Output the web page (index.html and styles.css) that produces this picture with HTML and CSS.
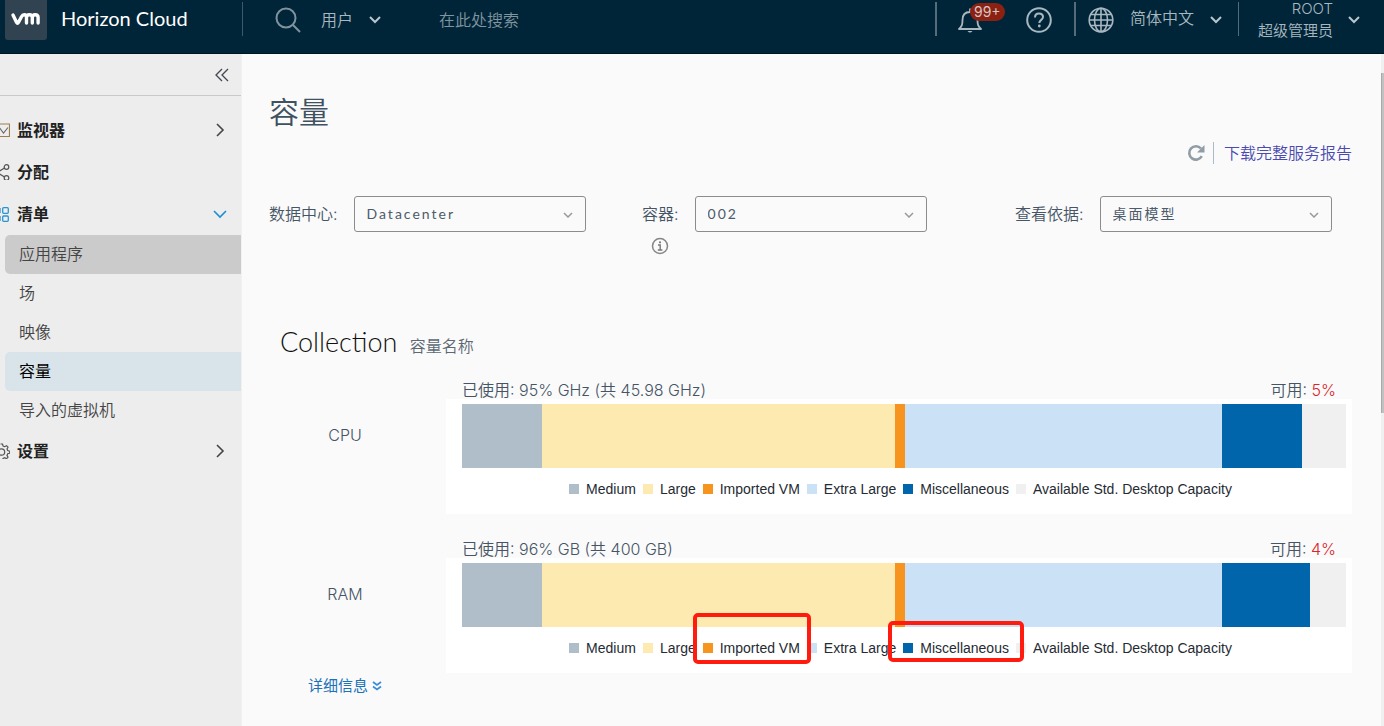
FILE: index.html
```html
<!DOCTYPE html>
<html lang="zh-CN">
<head>
<meta charset="utf-8">
<title>Horizon Cloud - 容量</title>
<meta name="viewport" content="width=device-width, initial-scale=1">
<link rel="stylesheet" href="styles.css">
</head>
<body>
<header class="topbar">
  <div class="brand">
    <svg class="brand-logo" viewBox="0 0 42 40" role="img" aria-label="vm"><path d="M0 0h42v37q0 3-3 3H3q-3 0-3-3z" fill="#314351"/><path d="M8 15l3.600 7.500q.9 1.600 1.800 0l3.200-6q.9-1.800 2.600-1.800 2.300 0 2.300 2.600V23v-5.500q0-2.800 2.900-2.800t2.900 2.800V23v-5.500q0-2.800 2.900-2.800t2.900 2.800V23" fill="none" stroke="#fff" stroke-width="3.400" stroke-linecap="round" stroke-linejoin="round"/></svg>
    <span class="brand-name">Horizon Cloud</span>
  </div>
  <div class="search">
    <svg class="icon-26" viewBox="0 0 26 26"><g fill="none" stroke="#7f939d" stroke-width="2"><circle cx="11" cy="11" r="9.500"/><path d="M18 18l7 7"/></g></svg>
    <button class="bar-button search-type" type="button">用户
      <svg class="chevron" viewBox="0 0 12 8"><path d="M1 1l5 5 5-5"/></svg>
    </button>
    <input class="search-input" type="text" placeholder="在此处搜索" aria-label="在此处搜索">
  </div>
  <div class="tools">
    <button class="bar-button bell" type="button" aria-label="通知">
      <svg class="icon-26" viewBox="0 0 26 26"><path d="M3 22h22c-3-3-3.500-4.500-3.500-9 0-5-2.500-8-7.500-8s-7.500 3-7.500 8c0 4.500-.5 6-3.500 9zM14 5V1.500" fill="none" stroke="#a9b8c0" stroke-width="1.800" stroke-linejoin="round"/><path d="M11.500 24h5q-2.500 3-5 0z" fill="#a9b8c0"/></svg>
      <span class="badge">99+</span>
    </button>
    <button class="bar-button help" type="button" aria-label="帮助">
      <svg class="icon-26" viewBox="0 0 26 26"><g fill="none" stroke="#a9b8c0" stroke-width="2"><circle cx="13" cy="13" r="11.800"/><path d="M9 10.500q0-4 4-4t4 3.600c0 2.700-3.700 2.900-3.700 6"/></g><circle cx="13.300" cy="19" r="1.400" fill="#a9b8c0"/></svg>
    </button>
    <button class="bar-button language" type="button">
      <svg class="icon-26" viewBox="0 0 26 26"><g fill="none" stroke="#a9b8c0" stroke-width="1.600"><circle cx="13" cy="13" r="11.800"/><ellipse cx="13" cy="13" rx="6.500" ry="11.800"/><path d="M13 1v24M1 13h24M3 7.500h20M3 18.500h20"/></g></svg>
      <span class="language-name">简体中文</span>
      <svg class="chevron" viewBox="0 0 12 8"><path d="M1 1l5 5 5-5"/></svg>
    </button>
    <button class="bar-button account" type="button">
      <span class="account-name"><span>ROOT</span><span>超级管理员</span></span>
      <svg class="chevron" viewBox="0 0 12 8"><path d="M1 1l5 5 5-5"/></svg>
    </button>
  </div>
</header>
<div class="layout">
  <aside class="sidebar">
    <div class="collapse">
      <button class="collapse-button" type="button" aria-label="收起"><svg viewBox="0 0 14 14"><path d="M7 1L1 7l6 6M13 1L7 7l6 6" fill="none" stroke="#3e4650" stroke-width="1.300"/></svg></button>
    </div>
    <nav class="nav">
      <a class="nav-group" href="#">
        <svg class="nav-icon" viewBox="6 0 10 16"><path d="M1 2h14.500v12.500H1z" fill="none" stroke="#a27c50" stroke-width="1.200"/><path d="M5 5l4.500 6L14 5.500" fill="none" stroke="#666" stroke-width="1.100"/></svg>
        <span>监视器</span>
        <svg class="nav-arrow" viewBox="0 0 14 14"><path d="M4 1l6 6-6 6"/></svg>
      </a>
      <a class="nav-group" href="#">
        <svg class="nav-icon" viewBox="6 0 10 16"><g fill="none" stroke="#555" stroke-width="1.200"><circle cx="12.500" cy="3" r="2.300"/><circle cx="12.500" cy="14" r="2.300"/><path d="M4 8l6.500-4M4 9l6.500 4"/></g></svg>
        <span>分配</span>
      </a>
      <a class="nav-group" href="#">
        <svg class="nav-icon" viewBox="6 0 10 16"><g fill="none" stroke="#2a94cf" stroke-width="1.300"><rect x="8.700" y="1.700" width="5.600" height="5.600" rx="1"/><rect x="8.700" y="10" width="5.600" height="5.300" rx="1"/><path d="M6 2v5M6 10v5"/></g></svg>
        <span>清单</span>
        <svg class="nav-arrow nav-arrow-open" viewBox="0 0 14 14"><path d="M1 4l6 6 6-6"/></svg>
      </a>
      <a class="nav-item nav-item-hover" href="#">应用程序</a>
      <a class="nav-item" href="#">场</a>
      <a class="nav-item" href="#">映像</a>
      <a class="nav-item nav-item-active" href="#" aria-current="page">容量</a>
      <a class="nav-item" href="#">导入的虚拟机</a>
      <a class="nav-group" href="#">
        <svg class="nav-icon" viewBox="6 0 10 16"><g fill="none" stroke="#555" stroke-width="1.200"><circle cx="7.500" cy="9" r="3.200"/><path d="M6.500 1h2l.6 2 1.600.7 1.800-1 1.500 1.500-1 1.800.7 1.600 2 .6v2l-2 .6-.7 1.600 1 1.800-1.500 1.500-1.800-1-1.600.7-.6 1.500h-2"/></g></svg>
        <span>设置</span>
        <svg class="nav-arrow" viewBox="0 0 14 14"><path d="M4 1l6 6-6 6"/></svg>
      </a>
    </nav>
  </aside>
  <main class="content">
    <h1 class="title">容量</h1>
    <div class="actions">
      <button class="refresh" type="button" aria-label="刷新"><svg viewBox="0 0 18 18"><path d="M14.800 12.200A6.700 6.700 0 1 1 14 4.500" fill="none" stroke="#909da5" stroke-width="2.600"/><path d="M17.500 1v7.500H10z" fill="#909da5"/></svg></button>
      <a class="report" href="#">下载完整服务报告</a>
    </div>
    <form class="filters">
      <div class="filter">
        <label for="dc">数据中心:</label>
        <div class="picker"><select id="dc"><option>Datacenter</option></select><svg viewBox="0 0 10 6"><path d="M1 1l4 4 4-4"/></svg></div>
      </div>
      <div class="filter">
        <label for="pod">容器:</label>
        <div class="picker"><select id="pod"><option>002</option></select><svg viewBox="0 0 10 6"><path d="M1 1l4 4 4-4"/></svg></div>
        <svg class="info" viewBox="0 0 18 18"><circle cx="9" cy="9" r="7.500" fill="none" stroke="#858585" stroke-width="1.500"/><circle cx="9" cy="5.300" r="1.100" fill="#777"/><path d="M7 8h2.200v5M6.800 13h4.600" fill="none" stroke="#777" stroke-width="1.400"/></svg>
      </div>
      <div class="filter">
        <label for="view">查看依据:</label>
        <div class="picker"><select id="view"><option>桌面模型</option></select><svg viewBox="0 0 10 6"><path d="M1 1l4 4 4-4"/></svg></div>
      </div>
    </form>
    <h2 class="pod-name">Collection <small>容量名称</small></h2>
    <section class="usage">
      <h3 class="usage-name">CPU</h3>
      <div class="usage-body">
        <div class="usage-text"><span>已使用: 95% GHz (共 45.98 GHz)</span><span>可用: <b>5%</b></span></div>
        <div class="panel">
          <div class="bar"><i class="medium" style="flex-grow:80"></i><i class="large" style="flex-grow:353"></i><i class="imported" style="flex-grow:10"></i><i class="xlarge" style="flex-grow:317"></i><i class="misc" style="flex-grow:80"></i><i class="free" style="flex-grow:44"></i></div>
          <ul class="legend"><li><i class="medium"></i>Medium</li><li><i class="large"></i>Large</li><li><i class="imported"></i>Imported VM</li><li><i class="xlarge"></i>Extra Large</li><li><i class="misc"></i>Miscellaneous</li><li><i class="free"></i>Available Std. Desktop Capacity</li></ul>
        </div>
      </div>
    </section>
    <section class="usage">
      <h3 class="usage-name">RAM</h3>
      <div class="usage-body">
        <div class="usage-text"><span>已使用: 96% GB (共 400 GB)</span><span>可用: <b>4%</b></span></div>
        <div class="panel">
          <div class="bar"><i class="medium" style="flex-grow:80"></i><i class="large" style="flex-grow:353"></i><i class="imported" style="flex-grow:10"></i><i class="xlarge" style="flex-grow:317"></i><i class="misc" style="flex-grow:88"></i><i class="free" style="flex-grow:36"></i></div>
          <ul class="legend"><li><i class="medium"></i>Medium</li><li><i class="large"></i>Large</li><li class="marked marked-imported"><i class="imported"></i>Imported VM</li><li><i class="xlarge"></i>Extra Large</li><li class="marked marked-misc"><i class="misc"></i>Miscellaneous</li><li><i class="free"></i>Available Std. Desktop Capacity</li></ul>
        </div>
      </div>
    </section>
    <a class="details" href="#">详细信息<svg viewBox="0 0 10 10"><path d="M1 1l4 3 4-3M1 5.500l4 3 4-3" fill="none" stroke="#3b8ad8" stroke-width="1.700"/></svg></a>
  </main>
  <div class="scroll-track"><div class="scroll-thumb"></div></div>
</div>
</body>
</html>
```
FILE: styles.css
```css
* { box-sizing: border-box; }
body {
  margin: 0;
  min-height: 100vh;
  display: flex;
  flex-direction: column;
  background: #fafafa;
  color: #465566;
  font: 350 16px/20px Inter, "Noto Sans CJK SC", sans-serif;
}
a { color: inherit; text-decoration: none; }
button { margin: 0; padding: 0; border: 0; background: none; color: inherit; font: inherit; cursor: pointer; }
h1, h2, h3, ul { margin: 0; padding: 0; font-weight: 350; }
svg { display: block; flex: none; }

.topbar {
  display: flex;
  height: 54px;
  padding: 0 24px 14px 5px;
  background: #002538;
  border-bottom: 1px solid #001522;
  color: #a9b8c0;
}
.brand {
  display: flex;
  align-items: center;
  gap: 14px;
  width: 238px;
  background: linear-gradient(#40596a, #40596a) right 2px / 1px 34px no-repeat;
}
.brand-logo { width: 42px; height: 40px; }
.brand-name { padding-bottom: 3px; color: #fff; font: 400 20px/24px Lato, sans-serif; }
.search { display: flex; flex: 1; align-items: center; padding-left: 32px; }
.icon-26 { width: 26px; height: 26px; }
.bar-button { display: flex; align-items: center; }
.search-type { gap: 16px; margin-left: 20px; }
.chevron { width: 12px; height: 8px; fill: none; stroke: #b9c6cc; stroke-width: 2; }
.search-input {
  flex: 1;
  min-width: 80px;
  margin-left: 58px;
  padding: 0;
  border: 0;
  outline: 0;
  background: none;
  color: inherit;
  font: inherit;
}
.search-input::placeholder { color: #8195a0; opacity: 1; }
.tools { display: flex; }
.bell, .language, .account { background: linear-gradient(#566d79, #566d79) left 2px / 2px 34px no-repeat; }
.bell { position: relative; width: 91px; padding-left: 21px; }
.badge {
  position: absolute;
  left: 35px;
  top: 3px;
  padding: 0 4px;
  border-radius: 9px;
  background: #8c2113;
  color: #d5c5c4;
  font-size: 14px;
  font-weight: 400;
  line-height: 18px;
}
.help { width: 48px; }
.language { gap: 16px; width: 164px; padding-left: 14px; }
.language-name { padding-bottom: 4px; }
.account { justify-content: flex-end; gap: 15px; width: 122px; background-size: 1px 34px; }
.account-name { display: grid; text-align: right; font-size: 15px; line-height: 22px; }

.layout { display: flex; flex: 1; }
.sidebar { width: 242px; background: #ededed; border-right: 1px solid #f1f1f1; color: #444; }
.collapse { display: flex; justify-content: flex-end; height: 42px; padding: 0 12px; border-bottom: 1px solid #c9c9c9; }
.collapse-button svg { width: 14px; height: 14px; }
.nav { padding-top: 13px; }
.nav-group { display: flex; align-items: center; gap: 7px; height: 42px; padding-right: 14px; color: #222; font-weight: 700; }
.nav-icon { width: 10px; height: 16px; }
.nav-arrow { width: 14px; height: 14px; margin-left: auto; fill: none; stroke: #444; stroke-width: 1.6; }
.nav-arrow-open { stroke: #1b8fd6; }
.nav-item { display: flex; align-items: center; height: 39px; margin-left: 5px; padding: 0 14px 2px; border-radius: 5px 0 0 5px; }
.nav-item-hover { background: #cbcbcb; }
.nav-item-active { background: #d9e4ea; color: #000; font-weight: 400; }

.content { flex: 1; min-width: 0; padding: 38px 29px 24px 27px; }
.title { color: #40515f; font-size: 30px; line-height: 40px; }
.actions { display: flex; justify-content: flex-end; align-items: center; height: 22px; margin-top: 10px; }
.refresh { margin-right: 8px; }
.refresh svg { width: 18px; height: 18px; }
.report { padding-left: 10px; border-left: 1px solid #a9bccb; color: #4a4ab0; line-height: 22px; }
.filters { display: grid; grid-template-columns: repeat(3, 1fr); gap: 36px; margin-top: 32px; }
.filter { display: grid; grid-template-columns: max-content minmax(0, 232px); align-items: center; align-content: start; gap: 5px 16px; }
.picker { position: relative; }
.picker select {
  appearance: none;
  width: 100%;
  height: 36px;
  padding: 0 12px;
  border: 1px solid #8c8c8c;
  border-radius: 3px;
  background: #fafafa;
  color: #4d5b6b;
  font: 400 14px/20px Lato, "Noto Sans CJK SC", sans-serif;
  letter-spacing: 2px;
}
.picker svg { position: absolute; right: 13px; top: 16px; width: 10px; height: 6px; fill: none; stroke: #999; stroke-width: 1.5; pointer-events: none; }
.info { width: 18px; height: 18px; justify-self: center; }

.pod-name { margin-top: 71px; padding-left: 11px; color: #111; font: 300 27px/32px Lato, "Noto Sans CJK SC", sans-serif; }
.pod-name small { margin-left: 5px; color: #5c6873; font-size: 16px; font-weight: 350; }
.usage { display: grid; grid-template-columns: 152px minmax(0, 1fr); gap: 25px; margin-top: 19px; }
.usage + .usage { margin-top: 26px; }
.usage-name { padding-top: 44px; text-align: center; font-size: 16px; line-height: 20px; }
.usage-text { display: flex; justify-content: space-between; padding: 0 16px; line-height: 18px; }
.usage-text b { color: #d9252b; font-weight: 350; }
.panel { height: 115px; padding: 5px 6px 0 16px; background: #fff; }
.bar { display: flex; height: 64px; }
.bar i { flex-basis: 0; }
.legend {
  display: flex;
  justify-content: center;
  gap: 7px;
  margin-top: 13px;
  padding-right: 7px;
  list-style: none;
  color: #262b33;
  font: 400 14px/16px "Liberation Sans", Arial, sans-serif;
  white-space: nowrap;
}
.legend li { display: flex; align-items: center; gap: 7px; }
.legend i { width: 10px; height: 10px; }
.medium { background: #b0bec9; }
.large { background: #fdeab1; }
.imported { background: #f7941e; }
.xlarge { background: #cbe1f5; }
.misc { background: #0065ab; }
.free { background: #f0f0f0; }
.marked { position: relative; }
.marked::after { content: ""; position: absolute; border: 4px solid #ff1b0e; border-radius: 5px; }
.marked-imported::after { inset: -27px -11px -8px -10px; }
.marked-misc::after { inset: -19px -15px -6px -15px; }
.details { display: flex; align-items: center; gap: 4px; width: max-content; margin: 3px 0 0 39px; color: #1b72b8; font-size: 15px; font-weight: 400; }
.details svg { width: 10px; height: 10px; }

.scroll-track { width: 3px; padding-top: 19px; background: #f0f0f0; }
.scroll-thumb { height: 340px; border-left: 1px solid #aaa; background: #c1c1c1; }
```
